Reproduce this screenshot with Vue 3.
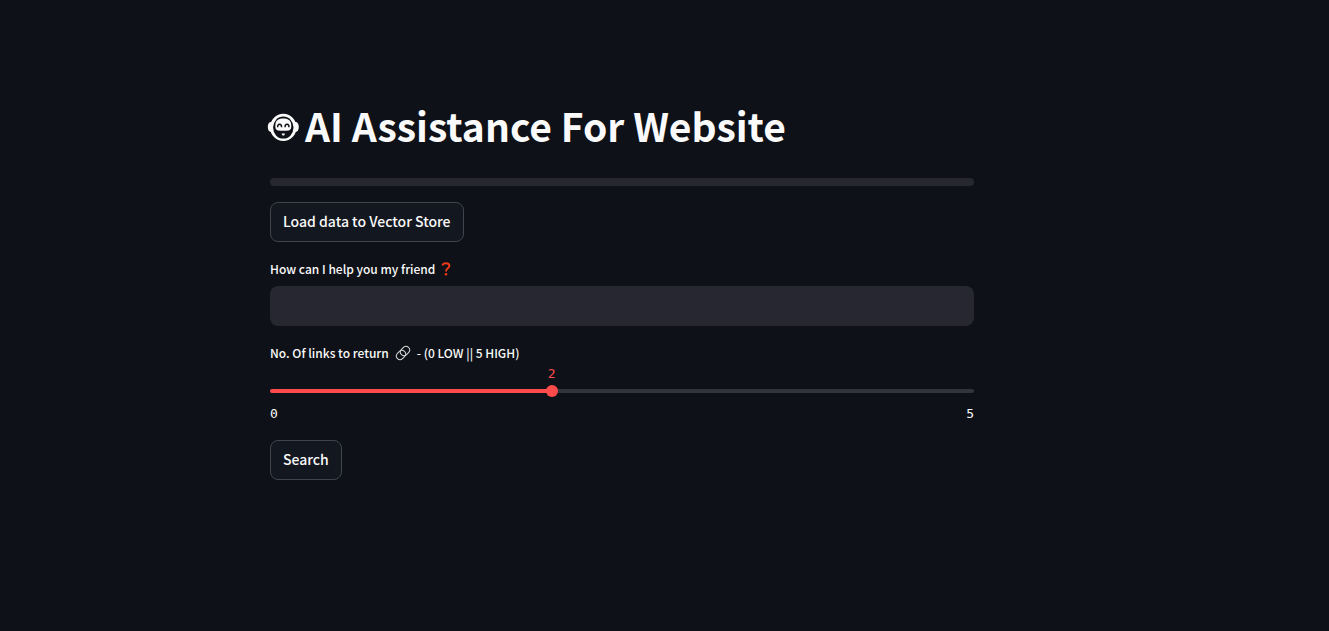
<script setup>
import { computed, ref } from 'vue'

const MAX_LINKS = 5
const query = ref('')
const links = ref(2)
const share = computed(() => (links.value / MAX_LINKS) * 100 + '%')
</script>

<template>
  <div class="app">
    <main class="block">
      <h1>
        <svg class="face" viewBox="0 0 32 30" aria-hidden="true">
          <ellipse cx="3.8" cy="15" rx="3" ry="5" fill="#fafafa" />
          <ellipse cx="28.8" cy="15" rx="3" ry="5" fill="#fafafa" />
          <ellipse cx="16.3" cy="15.4" rx="13.2" ry="13.6" fill="#fafafa" />
          <ellipse cx="16.3" cy="15.6" rx="10.2" ry="11" fill="#0e1117" />
          <path d="M8.4 13C8.4 8.4 12 6.6 16.3 6.6C20.6 6.6 24.2 8.4 24.2 13C24.6 15.8 23.8 18.2 21.8 18.4Q16.3 19 10.8 18.4C8.8 18.2 8 15.8 8.4 13Z" fill="#fafafa" />
          <path d="M10.6 15.2C10.6 11.2 14.6 11.2 14.6 15.2M18 15.2C18 11.2 22 11.2 22 15.2" fill="none" stroke="#0e1117" stroke-width="1.4" />
          <path d="M14.5 21.4H18.1L17.1 23.6H15.5Z" fill="#fafafa" />
        </svg>
        <span>AI Assistance For Website</span>
      </h1>

      <progress class="progress" value="0" max="100" aria-label="Loading progress"></progress>

      <button type="button">Load data to Vector Store</button>

      <div class="field">
        <label for="query">
          <span>How can I help you my friend</span>
          <svg class="question" viewBox="0 0 10 14" aria-hidden="true">
            <path d="M1.5 3.5C2 .7 8.4.3 8.4 4C8.4 6.4 5 6.4 5 9.4" fill="none" stroke="#f03a17" stroke-width="1.9" />
            <circle cx="5" cy="12.3" r="1.3" fill="#f03a17" />
          </svg>
        </label>
        <input id="query" v-model="query" class="text" type="text" />
      </div>

      <div class="field">
        <label for="links">
          <span>No. Of links to return</span>
          <svg class="link" viewBox="0 0 16 16" fill="none" stroke="#d8d8d8" aria-hidden="true">
            <rect x="-5" y="-3.6" width="10" height="7.2" rx="3.6" transform="translate(6 10) rotate(-45)" />
            <rect x="-5" y="-3.6" width="10" height="7.2" rx="3.6" transform="translate(10 6) rotate(-45)" />
          </svg>
          <span>- (0 LOW || 5 HIGH)</span>
        </label>
        <div class="slider">
          <div class="track"><div class="fill" :style="{ width: share }"></div></div>
          <input id="links" v-model.number="links" type="range" min="0" :max="MAX_LINKS" />
          <output for="links" :style="{ left: share }">{{ links }}</output>
        </div>
        <div class="ticks"><span>0</span><span>{{ MAX_LINKS }}</span></div>
      </div>

      <button type="button">Search</button>
    </main>
  </div>
</template>

<style>
body {
  background: #0e1117;
}
</style>

<style scoped>
.app {
  padding: 96px 85px 96px 0;
  color: #fafafa;
  font-family: "Noto Sans CJK SC", "Noto Sans", sans-serif;
}
.block {
  display: flex;
  flex-direction: column;
  align-items: flex-start;
  gap: 16px;
  max-width: 704px;
  margin: 0 auto;
}
h1 {
  display: flex;
  align-items: center;
  gap: 6px;
  margin: 0;
  padding: 4px 0 8px;
  font-size: 39px;
  font-weight: 700;
  line-height: 50px;
}
h1 span {
  padding-bottom: 4px;
}
.face {
  width: 32px;
  height: 30px;
  margin-left: -3px;
}
.progress {
  appearance: none;
  display: block;
  width: 100%;
  height: 8px;
  border: 0;
  border-radius: 4px;
  overflow: hidden;
  background: #262730;
}
.progress::-webkit-progress-bar {
  background: #262730;
}
.progress::-webkit-progress-value {
  background: #ff4b4b;
}
button {
  height: 40px;
  padding: 0 12px 2px;
  border: 1px solid #41444c;
  border-radius: 8px;
  background: #131720;
  color: inherit;
  font-family: inherit;
  font-size: 14px;
  font-weight: 500;
  line-height: 24px;
  cursor: pointer;
}
.field {
  width: 100%;
}
label {
  display: flex;
  align-items: center;
  gap: 6px;
  height: 22px;
  margin-bottom: 6px;
  font-size: 12px;
  font-weight: 500;
  line-height: 22px;
}
.question {
  width: 10px;
  height: 14px;
}
.link {
  width: 16px;
  height: 16px;
}
.text {
  display: block;
  box-sizing: border-box;
  width: 100%;
  height: 40px;
  padding: 0 12px;
  border: 0;
  border-radius: 8px;
  outline: 0;
  background: #262730;
  color: inherit;
  font: inherit;
}
.slider {
  position: relative;
  padding-top: 19px;
}
.track {
  height: 4px;
  border-radius: 2px;
  overflow: hidden;
  background: #31333d;
}
.fill {
  height: 100%;
  background: #ff4b4b;
}
input[type="range"] {
  appearance: none;
  position: absolute;
  left: -6px;
  bottom: -4px;
  width: calc(100% + 12px);
  height: 12px;
  margin: 0;
  background: transparent;
}
input[type="range"]::-webkit-slider-thumb {
  appearance: none;
  width: 12px;
  height: 12px;
  border-radius: 50%;
  background: #ff4b4b;
}
output {
  position: absolute;
  top: -6px;
  transform: translateX(-50%);
  color: #ff4b4b;
  font-family: "DejaVu Sans Mono", monospace;
  font-size: 13px;
  line-height: 20px;
}
.ticks {
  display: flex;
  justify-content: space-between;
  margin-top: 11px;
  font-family: "DejaVu Sans Mono", monospace;
  font-size: 13px;
  line-height: 20px;
}
</style>
